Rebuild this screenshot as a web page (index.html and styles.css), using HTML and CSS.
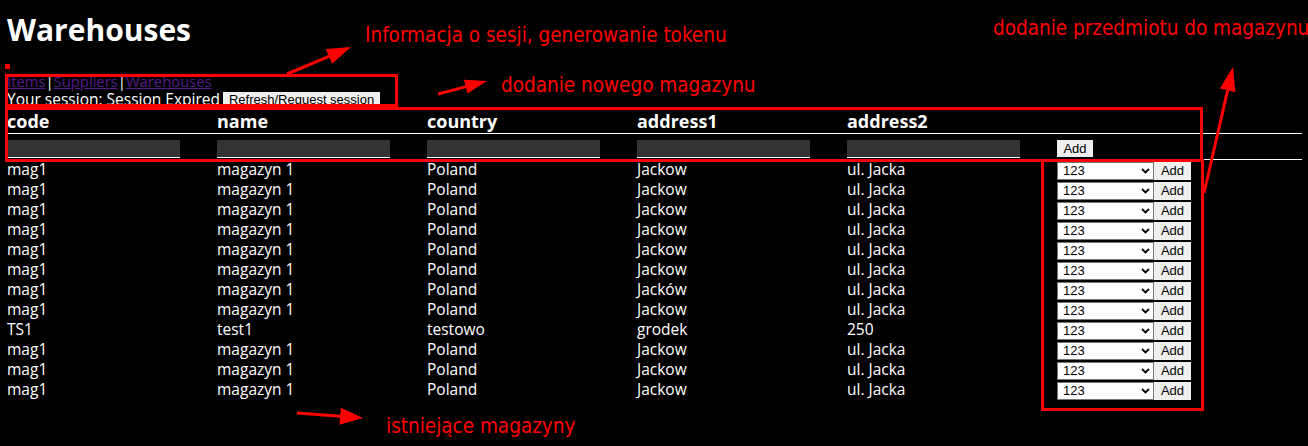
FILE: index.html
```html
<!DOCTYPE html>
<html lang="pl">
<head>
<meta charset="utf-8">
<title>Warehouses</title>
<link rel="stylesheet" href="styles.css">
</head>
<body>
<div class="page">
  <h1 class="title">Warehouses</h1>
  <div class="nav"><a href="#" class="nav-link">Items</a>|<a href="#" class="nav-link">Suppliers</a>|<a href="#" class="nav-link">Warehouses</a></div>
  <div class="session"><span>Your session: Session Expired</span><button class="btn btn-session">Refresh/Request session</button></div>

  <div class="table">
    <div class="row row-head">
      <div class="cell">code</div>
      <div class="cell">name</div>
      <div class="cell">country</div>
      <div class="cell">address1</div>
      <div class="cell">address2</div>
      <div class="cell"></div>
    </div>
    <div class="row row-form">
      <div class="cell"><input class="field" type="text"></div>
      <div class="cell"><input class="field" type="text"></div>
      <div class="cell"><input class="field" type="text"></div>
      <div class="cell"><input class="field" type="text"></div>
      <div class="cell"><input class="field" type="text"></div>
      <div class="cell"><button class="btn btn-add-new">Add</button></div>
    </div>

    <div class="row row-data"><div class="cell">mag1</div><div class="cell">magazyn 1</div><div class="cell">Poland</div><div class="cell">Jackow</div><div class="cell">ul. Jacka</div><div class="cell action"><div class="pick"><select class="pick-select"><option>123</option></select><svg class="chev" width="9" height="6" viewBox="0 0 9 6"><path d="M1 1 L4.5 4.5 L8 1" fill="none" stroke="#000" stroke-width="1.8"/></svg></div><button class="btn btn-add">Add</button></div></div>
    <div class="row row-data"><div class="cell">mag1</div><div class="cell">magazyn 1</div><div class="cell">Poland</div><div class="cell">Jackow</div><div class="cell">ul. Jacka</div><div class="cell action"><div class="pick"><select class="pick-select"><option>123</option></select><svg class="chev" width="9" height="6" viewBox="0 0 9 6"><path d="M1 1 L4.5 4.5 L8 1" fill="none" stroke="#000" stroke-width="1.8"/></svg></div><button class="btn btn-add">Add</button></div></div>
    <div class="row row-data"><div class="cell">mag1</div><div class="cell">magazyn 1</div><div class="cell">Poland</div><div class="cell">Jackow</div><div class="cell">ul. Jacka</div><div class="cell action"><div class="pick"><select class="pick-select"><option>123</option></select><svg class="chev" width="9" height="6" viewBox="0 0 9 6"><path d="M1 1 L4.5 4.5 L8 1" fill="none" stroke="#000" stroke-width="1.8"/></svg></div><button class="btn btn-add">Add</button></div></div>
    <div class="row row-data"><div class="cell">mag1</div><div class="cell">magazyn 1</div><div class="cell">Poland</div><div class="cell">Jackow</div><div class="cell">ul. Jacka</div><div class="cell action"><div class="pick"><select class="pick-select"><option>123</option></select><svg class="chev" width="9" height="6" viewBox="0 0 9 6"><path d="M1 1 L4.5 4.5 L8 1" fill="none" stroke="#000" stroke-width="1.8"/></svg></div><button class="btn btn-add">Add</button></div></div>
    <div class="row row-data"><div class="cell">mag1</div><div class="cell">magazyn 1</div><div class="cell">Poland</div><div class="cell">Jackow</div><div class="cell">ul. Jacka</div><div class="cell action"><div class="pick"><select class="pick-select"><option>123</option></select><svg class="chev" width="9" height="6" viewBox="0 0 9 6"><path d="M1 1 L4.5 4.5 L8 1" fill="none" stroke="#000" stroke-width="1.8"/></svg></div><button class="btn btn-add">Add</button></div></div>
    <div class="row row-data"><div class="cell">mag1</div><div class="cell">magazyn 1</div><div class="cell">Poland</div><div class="cell">Jackow</div><div class="cell">ul. Jacka</div><div class="cell action"><div class="pick"><select class="pick-select"><option>123</option></select><svg class="chev" width="9" height="6" viewBox="0 0 9 6"><path d="M1 1 L4.5 4.5 L8 1" fill="none" stroke="#000" stroke-width="1.8"/></svg></div><button class="btn btn-add">Add</button></div></div>
    <div class="row row-data"><div class="cell">mag1</div><div class="cell">magazyn 1</div><div class="cell">Poland</div><div class="cell">Jacków</div><div class="cell">ul. Jacka</div><div class="cell action"><div class="pick"><select class="pick-select"><option>123</option></select><svg class="chev" width="9" height="6" viewBox="0 0 9 6"><path d="M1 1 L4.5 4.5 L8 1" fill="none" stroke="#000" stroke-width="1.8"/></svg></div><button class="btn btn-add">Add</button></div></div>
    <div class="row row-data"><div class="cell">mag1</div><div class="cell">magazyn 1</div><div class="cell">Poland</div><div class="cell">Jackow</div><div class="cell">ul. Jacka</div><div class="cell action"><div class="pick"><select class="pick-select"><option>123</option></select><svg class="chev" width="9" height="6" viewBox="0 0 9 6"><path d="M1 1 L4.5 4.5 L8 1" fill="none" stroke="#000" stroke-width="1.8"/></svg></div><button class="btn btn-add">Add</button></div></div>
    <div class="row row-data"><div class="cell">TS1</div><div class="cell">test1</div><div class="cell">testowo</div><div class="cell">grodek</div><div class="cell">250</div><div class="cell action"><div class="pick"><select class="pick-select"><option>123</option></select><svg class="chev" width="9" height="6" viewBox="0 0 9 6"><path d="M1 1 L4.5 4.5 L8 1" fill="none" stroke="#000" stroke-width="1.8"/></svg></div><button class="btn btn-add">Add</button></div></div>
    <div class="row row-data"><div class="cell">mag1</div><div class="cell">magazyn 1</div><div class="cell">Poland</div><div class="cell">Jackow</div><div class="cell">ul. Jacka</div><div class="cell action"><div class="pick"><select class="pick-select"><option>123</option></select><svg class="chev" width="9" height="6" viewBox="0 0 9 6"><path d="M1 1 L4.5 4.5 L8 1" fill="none" stroke="#000" stroke-width="1.8"/></svg></div><button class="btn btn-add">Add</button></div></div>
    <div class="row row-data"><div class="cell">mag1</div><div class="cell">magazyn 1</div><div class="cell">Poland</div><div class="cell">Jackow</div><div class="cell">ul. Jacka</div><div class="cell action"><div class="pick"><select class="pick-select"><option>123</option></select><svg class="chev" width="9" height="6" viewBox="0 0 9 6"><path d="M1 1 L4.5 4.5 L8 1" fill="none" stroke="#000" stroke-width="1.8"/></svg></div><button class="btn btn-add">Add</button></div></div>
    <div class="row row-data"><div class="cell">mag1</div><div class="cell">magazyn 1</div><div class="cell">Poland</div><div class="cell">Jackow</div><div class="cell">ul. Jacka</div><div class="cell action"><div class="pick"><select class="pick-select"><option>123</option></select><svg class="chev" width="9" height="6" viewBox="0 0 9 6"><path d="M1 1 L4.5 4.5 L8 1" fill="none" stroke="#000" stroke-width="1.8"/></svg></div><button class="btn btn-add">Add</button></div></div>
  </div>
</div>

<div class="notes">
  <svg class="notes-svg" width="1308" height="446" viewBox="0 0 1308 446">
    <rect x="5" y="64" width="5" height="5" fill="#ff0000"/>
    <rect x="6.5" y="75.5" width="390" height="30" fill="none" stroke="#ff0000" stroke-width="3"/>
    <rect x="6.5" y="108.5" width="1195" height="52" fill="none" stroke="#ff0000" stroke-width="3"/>
    <rect x="1042.5" y="160.5" width="160" height="249" fill="none" stroke="#ff0000" stroke-width="3"/>
    <line x1="287" y1="74" x2="329" y2="56.3" stroke="#ff0000" stroke-width="3"/>
    <polygon points="351,47 332,63.7 325.8,48.9" fill="#ff0000"/>
    <line x1="438" y1="94" x2="466" y2="86.6" stroke="#ff0000" stroke-width="3"/>
    <polygon points="487,81 467.5,93.4 463.9,79.8" fill="#ff0000"/>
    <line x1="1204" y1="193" x2="1227.6" y2="90.4" stroke="#ff0000" stroke-width="3"/>
    <polygon points="1233,67 1235.4,92.2 1219.8,88.6" fill="#ff0000"/>
    <line x1="297" y1="413" x2="340.5" y2="416.3" stroke="#ff0000" stroke-width="3"/>
    <polygon points="363,418 339.5,424.8 340.7,407.8" fill="#ff0000"/>
  </svg>
  <div class="note note-session">Informacja o sesji, generowanie tokenu</div>
  <div class="note note-new">dodanie nowego magazynu</div>
  <div class="note note-item">dodanie przedmiotu do magazynu</div>
  <div class="note note-list">istniejące magazyny</div>
</div>
</body>
</html>
```

FILE: styles.css
```css
* {
  box-sizing: border-box;
}

html,
body {
  margin: 0;
  padding: 0;
  background: #000;
}

body {
  position: relative;
  width: 1308px;
  height: 446px;
  overflow: hidden;
  color: #fff;
  font-family: "Open Sans", "DejaVu Sans", sans-serif;
  font-size: 15.5px;
}

.page {
  padding: 0 6px;
}

.title {
  margin: 12px 0 0 1px;
  height: 36px;
  font-size: 30px;
  line-height: 36px;
  font-weight: 700;
}

.nav {
  margin: 24px 0 0 1px;
  height: 18px;
  font-size: 14.8px;
  line-height: 18px;
}

.nav-link {
  color: #551a8b;
}

.session {
  display: flex;
  align-items: center;
  gap: 3px;
  margin-left: 1px;
  height: 18px;
  line-height: 18px;
}

.btn {
  margin: 0;
  padding: 0 6px;
  border: 0;
  background: #efefef;
  color: #000;
  font-family: "Liberation Sans", Arial, sans-serif;
  font-size: 13px;
}

.btn-session {
  height: 15px;
  line-height: 15px;
}

.table {
  display: flex;
  flex-direction: column;
}

.row {
  display: grid;
  grid-template-columns: repeat(5, 210px) 1fr;
  padding-left: 1px;
}

.row-head {
  height: 26px;
  padding-top: 1px;
  border-bottom: 1px solid #fff;
  font-size: 18px;
  line-height: 24px;
  font-weight: 700;
}

.row-form {
  height: 26px;
  padding-top: 6px;
  border-bottom: 1px solid #fff;
}

.field {
  display: block;
  width: 173px;
  height: 18px;
  margin: 0;
  padding: 0;
  border: 0;
  border-bottom: 1px solid #fff;
  background: #333;
  color: #fff;
}

.btn-add-new {
  display: block;
  width: 36px;
  height: 17px;
  padding: 0;
  line-height: 17px;
}

.row-data {
  height: 20px;
  line-height: 18px;
}

.action {
  display: flex;
  padding-top: 2px;
}

.pick {
  position: relative;
  width: 97px;
  height: 18px;
}

.pick-select {
  display: block;
  width: 97px;
  height: 18px;
  margin: 0;
  padding: 0 0 0 5px;
  border: 1px solid #767676;
  border-radius: 0;
  background: #fff;
  color: #000;
  font-family: "Liberation Sans", Arial, sans-serif;
  font-size: 13px;
  line-height: 16px;
  appearance: none;
  -webkit-appearance: none;
}

.chev {
  position: absolute;
  right: 4px;
  top: 6px;
}

.btn-add {
  width: 37px;
  height: 18px;
  padding: 0;
  line-height: 18px;
}

.notes {
  position: absolute;
  left: 0;
  top: 0;
  width: 1308px;
  height: 446px;
  pointer-events: none;
}

.notes-svg {
  position: absolute;
  left: 0;
  top: 0;
}

.note {
  position: absolute;
  color: #ff0000;
  font-family: "DejaVu Sans Condensed", "DejaVu Sans", sans-serif;
  font-stretch: condensed;
  font-size: 20.5px;
  line-height: 24px;
  white-space: nowrap;
}

.note-session {
  left: 365px;
  top: 23px;
}

.note-new {
  left: 501px;
  top: 73px;
}

.note-item {
  left: 993px;
  top: 16px;
}

.note-list {
  left: 386px;
  top: 414px;
}
```
